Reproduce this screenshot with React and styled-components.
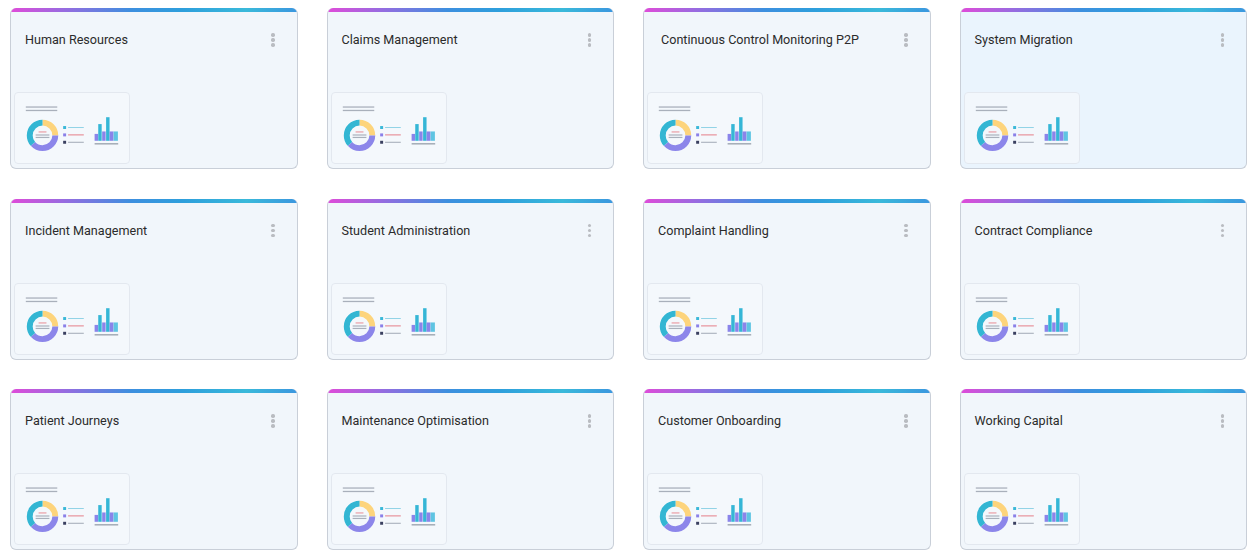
import React from 'react'
import styled, { createGlobalStyle } from 'styled-components'

const GlobalStyle = createGlobalStyle`
  html, body {
    margin: 0;
    padding: 0;
    background: #ffffff;
    font-family: Roboto, "Liberation Sans", Arial, sans-serif;
  }
`

const Grid = styled.div`
  display: grid;
  grid-template-columns: repeat(4, 1fr);
  column-gap: 29px;
  row-gap: 29.5px;
  padding: 8px 11px 0 10px;
`

const Card = styled.div`
  height: 161px;
  box-sizing: border-box;
  display: flex;
  flex-direction: column;
  background: ${p => (p.$active ? '#eaf4fd' : '#f1f6fb')};
  border: 1px solid #c9cfd8;
  border-top: none;
  border-radius: 6px;
  overflow: hidden;
`

const TopBar = styled.div`
  height: 4px;
  margin: 0 -1px;
  background: linear-gradient(90deg, #e04bd9 0%, #9a6ae0 18%, #3d8fdf 42%, #2e9fdc 60%, #3ab9da 82%, #3b96df 100%);
`

const Header = styled.div`
  display: flex;
  justify-content: space-between;
  align-items: flex-start;
  padding: 20px 22px 0 14px;
  padding-left: ${p => (p.$inset ? '17px' : '14px')};
`

const Title = styled.div`
  font-size: 12.6px;
  line-height: 16px;
  color: #2b2b2b;
`

const Kebab = styled.div`
  display: flex;
  flex-direction: column;
  gap: 1.5px;
  padding-top: 1px;
  span {
    width: 3.5px;
    height: 3.5px;
    border-radius: 50%;
    background: #b9bcc1;
  }
`

const Thumb = styled.div`
  margin: auto 0 4px 3px;
  width: 116px;
  height: 72px;
  box-sizing: border-box;
  border: 1px solid #e3e8ef;
  border-radius: 4px;
  background: ${p => (p.$active ? '#f2f7fc' : '#f4f8fc')};
  display: flex;
`

const arc = (r, from, to) => {
  const c = 2 * Math.PI * r
  return {
    strokeDasharray: `${c * (to - from)} ${c}`,
    strokeDashoffset: -c * from,
  }
}

const Preview = () => (
  <svg width="116" height="72" viewBox="0 0 116 72">
    <rect x="11" y="13" width="32" height="1.3" fill="#a9b0bb" />
    <rect x="11" y="16.5" width="32" height="1.3" fill="#a9b0bb" />
    <g transform="rotate(-90 28 42.5)">
      <circle cx="28" cy="42.5" r="13" fill="none" stroke="#fdd47c" strokeWidth="6" style={arc(13, 0, 0.25)} />
      <circle cx="28" cy="42.5" r="13" fill="none" stroke="#8c86ea" strokeWidth="6" style={arc(13, 0.25, 0.63)} />
      <circle cx="28" cy="42.5" r="13" fill="none" stroke="#33b6d3" strokeWidth="6" style={arc(13, 0.63, 1)} />
    </g>
    <rect x="24" y="38.5" width="8" height="1" fill="#e88a92" />
    <rect x="21" y="41.5" width="14" height="1.2" fill="#a9b0bb" />
    <rect x="21" y="44" width="14" height="1.2" fill="#a9b0bb" />
    <rect x="49" y="33" width="3" height="3" fill="#3ab8d8" />
    <rect x="54" y="34" width="16" height="1" fill="#8fd2e6" />
    <rect x="49" y="40.5" width="3" height="3" fill="#8a80e8" />
    <rect x="54" y="41.5" width="16" height="1" fill="#e47c87" />
    <rect x="49" y="48" width="3" height="3" fill="#3a4060" />
    <rect x="54" y="49" width="16" height="1" fill="#a0a8b4" />
    <rect x="81" y="41" width="3.5" height="7" fill="#8a84ea" />
    <rect x="84.7" y="31" width="3.5" height="17" fill="#35b6d6" />
    <rect x="88.7" y="38.5" width="3.5" height="9.5" fill="#8a84ea" />
    <rect x="92.7" y="24" width="3.5" height="24" fill="#35b6d6" />
    <rect x="96.2" y="38.5" width="4" height="9.5" fill="#8a84ea" />
    <rect x="100.3" y="38.5" width="4.4" height="9.5" fill="#5fc4e2" />
    <rect x="81" y="50.5" width="24" height="1.2" fill="#8d96a3" />
  </svg>
)

const projects = [
  'Human Resources',
  'Claims Management',
  'Continuous Control Monitoring P2P',
  'System Migration',
  'Incident Management',
  'Student Administration',
  'Complaint Handling',
  'Contract Compliance',
  'Patient Journeys',
  'Maintenance Optimisation',
  'Customer Onboarding',
  'Working Capital',
]

const App = () => (
  <>
    <GlobalStyle />
    <Grid>
      {projects.map(name => {
        const active = name === 'System Migration'
        return (
          <Card key={name} $active={active}>
            <TopBar />
            <Header $inset={name.startsWith('Continuous')}>
              <Title>{name}</Title>
              <Kebab>
                <span />
                <span />
                <span />
              </Kebab>
            </Header>
            <Thumb $active={active}>
              <Preview />
            </Thumb>
          </Card>
        )
      })}
    </Grid>
  </>
)

export default App
